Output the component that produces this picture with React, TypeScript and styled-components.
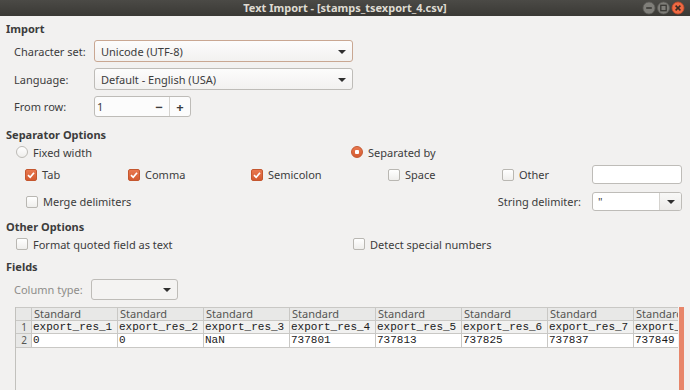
import styled, { createGlobalStyle } from "styled-components";

const GlobalStyle = createGlobalStyle`
  body {
    margin: 0;
    background: #f2f1f0;
    font-family: "Noto Sans", "DejaVu Sans", sans-serif;
  }
`;

const columns = [
  { type: "Standard", name: "export_res_1", value: "0" },
  { type: "Standard", name: "export_res_2", value: "0" },
  { type: "Standard", name: "export_res_3", value: "NaN" },
  { type: "Standard", name: "export_res_4", value: "737801" },
  { type: "Standard", name: "export_res_5", value: "737813" },
  { type: "Standard", name: "export_res_6", value: "737825" },
  { type: "Standard", name: "export_res_7", value: "737837" },
  { type: "Standard", name: "export_res_8", value: "737849" },
];

function WindowButtons() {
  return (
    <svg width="44" height="14" viewBox="0 0 44 14">
      <circle cx="7" cy="7" r="6" fill="#7f7e79" stroke="#5d5c58" strokeWidth="0.8" />
      <rect x="4.2" y="6.2" width="5.6" height="1.6" fill="#3a3935" />
      <circle cx="21.5" cy="7" r="6" fill="#7f7e79" stroke="#5d5c58" strokeWidth="0.8" />
      <rect x="18.8" y="4.3" width="5.4" height="5.4" fill="none" stroke="#3a3935" strokeWidth="1.3" />
      <circle cx="36" cy="7" r="6" fill="#ef6a43" stroke="#c8492a" strokeWidth="0.8" />
      <path d="M33.6 4.6 L38.4 9.4 M38.4 4.6 L33.6 9.4" stroke="#3a2a22" strokeWidth="1.5" />
    </svg>
  );
}

function Check({ checked }: { checked?: boolean }) {
  return (
    <CheckBox $checked={checked}>
      {checked && (
        <svg width="10" height="10" viewBox="0 0 10 10">
          <path d="M2 5.2 L4.2 7.3 L8 2.8" fill="none" stroke="#fff" strokeWidth="1.7" />
        </svg>
      )}
    </CheckBox>
  );
}

function Option({ label, checked }: { label: string; checked?: boolean }) {
  return (
    <OptionLabel>
      <Check checked={checked} />
      {label}
    </OptionLabel>
  );
}

function Radio({ label, checked }: { label: string; checked?: boolean }) {
  return (
    <OptionLabel>
      <RadioDot $checked={checked} />
      {label}
    </OptionLabel>
  );
}

function Combo({ value, width, focused, disabled }: { value: string; width: number; focused?: boolean; disabled?: boolean }) {
  return (
    <ComboBox $width={width} $focused={focused} $disabled={disabled}>
      <span>{value}</span>
      <Arrow />
    </ComboBox>
  );
}

export default function App() {
  return (
    <Window>
      <GlobalStyle />
      <TitleBar>
        <span />
        <Title>Text Import - [stamps_tsexport_4.csv]</Title>
        <ButtonSlot>
          <WindowButtons />
        </ButtonSlot>
      </TitleBar>

      <SectionTitle $top={6}>Import</SectionTitle>
      <FormGrid>
        <FieldLabel>Character set:</FieldLabel>
        <Combo value="Unicode (UTF-8)" width={259} focused />
        <FieldLabel>Language:</FieldLabel>
        <Combo value="Default - English (USA)" width={259} />
        <FieldLabel>From row:</FieldLabel>
        <Spin>
          <SpinText>1</SpinText>
          <SpinButton>−</SpinButton>
          <SpinButton $divider>+</SpinButton>
        </Spin>
      </FormGrid>

      <SectionTitle $top={11}>Separator Options</SectionTitle>
      <RadioRow>
        <Radio label="Fixed width" />
        <Radio label="Separated by" checked />
      </RadioRow>
      <SeparatorGrid>
        <Option label="Tab" checked />
        <Option label="Comma" checked />
        <Option label="Semicolon" checked />
        <Option label="Space" />
        <Option label="Other" />
        <TextEntry />
        <MergeCell>
          <Option label="Merge delimiters" />
        </MergeCell>
        <DelimiterLabel>String delimiter:</DelimiterLabel>
        <DelimiterCombo>
          <DelimiterText>"</DelimiterText>
          <DelimiterButton>
            <Arrow />
          </DelimiterButton>
        </DelimiterCombo>
      </SeparatorGrid>

      <SectionTitle $top={9}>Other Options</SectionTitle>
      <OtherRow>
        <Option label="Format quoted field as text" />
        <Option label="Detect special numbers" />
      </OtherRow>

      <SectionTitle $top={8}>Fields</SectionTitle>
      <ColumnTypeRow>
        <FieldLabel $disabled>Column type:</FieldLabel>
        <Combo value="" width={87} disabled />
      </ColumnTypeRow>

      <TableArea>
        <TableView>
          <Grid>
            <Corner />
            {columns.map((c, i) => (
              <HeadCell key={"h" + i}>{c.type}</HeadCell>
            ))}
            <RowNumber>1</RowNumber>
            {columns.map((c, i) => (
              <DataCell key={"n" + i}>{c.name}</DataCell>
            ))}
            <RowNumber $tall>2</RowNumber>
            {columns.map((c, i) => (
              <DataCell key={"v" + i} $white $tall>
                {c.value}
              </DataCell>
            ))}
          </Grid>
        </TableView>
        <ScrollThumb />
      </TableArea>
    </Window>
  );
}

const Window = styled.div`
  width: 690px;
  height: 390px;
  display: flex;
  flex-direction: column;
  background: #f2f1f0;
  color: #3c3c3c;
  font-size: 11px;
  overflow: hidden;
`;

const TitleBar = styled.div`
  flex: none;
  height: 16px;
  display: grid;
  grid-template-columns: 1fr auto 1fr;
  align-items: center;
  background: linear-gradient(#4b4a46, #3a3935);
`;

const Title = styled.div`
  color: #dfdbd2;
  font-weight: bold;
  font-size: 11px;
  line-height: 16px;
`;

const ButtonSlot = styled.div`
  display: flex;
  justify-content: flex-end;
  padding-right: 4px;
`;

const SectionTitle = styled.div<{ $top: number }>`
  margin-top: ${(p) => p.$top}px;
  padding-left: 6px;
  height: 14px;
  line-height: 14px;
  font-weight: bold;
`;

const FormGrid = styled.div`
  margin-top: 4px;
  padding-left: 14px;
  display: grid;
  grid-template-columns: 80px auto;
  grid-template-rows: 22px 22px 21px;
  row-gap: 6px;
  align-items: center;
  justify-items: start;
`;

const FieldLabel = styled.div<{ $disabled?: boolean }>`
  color: ${(p) => (p.$disabled ? "#8e8d8a" : "#3c3c3c")};
`;

const ComboBox = styled.div<{ $width: number; $focused?: boolean; $disabled?: boolean }>`
  box-sizing: border-box;
  width: ${(p) => p.$width}px;
  height: 100%;
  display: flex;
  align-items: center;
  justify-content: space-between;
  padding: 0 6px 0 6px;
  border: 1px solid ${(p) => (p.$focused ? "#c9a792" : "#bebcb8")};
  border-radius: 3px;
  background: ${(p) => (p.$disabled ? "#f4f3f2" : "linear-gradient(#fcfcfc, #f2f1f0)")};
  color: #3c3c3c;
`;

const Arrow = styled.span`
  width: 0;
  height: 0;
  border-left: 4px solid transparent;
  border-right: 4px solid transparent;
  border-top: 4px solid #2f2f2f;
  margin-top: 1px;
`;

const Spin = styled.div`
  box-sizing: border-box;
  width: 97px;
  height: 21px;
  display: flex;
  align-items: stretch;
  border: 1px solid #bebcb8;
  border-radius: 3px;
  background: #fcfcfc;
`;

const SpinText = styled.div`
  flex: 1;
  display: flex;
  align-items: center;
  padding-left: 2px;
`;

const SpinButton = styled.div<{ $divider?: boolean }>`
  width: 20px;
  display: flex;
  align-items: center;
  justify-content: center;
  font-size: 13px;
  font-weight: bold;
  color: #3c3c3c;
  border-left: ${(p) => (p.$divider ? "1px solid #d5d3cf" : "none")};
`;

const OptionLabel = styled.label`
  display: flex;
  align-items: center;
  gap: 5px;
  white-space: nowrap;
  color: #3c3c3c;
`;

const CheckBox = styled.span<{ $checked?: boolean }>`
  box-sizing: border-box;
  width: 12px;
  height: 12px;
  flex: none;
  display: flex;
  align-items: center;
  justify-content: center;
  border-radius: 2px;
  border: 1px solid ${(p) => (p.$checked ? "#c4572f" : "#b9b7b2")};
  background: ${(p) => (p.$checked ? "linear-gradient(#e9784f, #d45b31)" : "linear-gradient(#ffffff, #efeeec)")};
`;

const RadioDot = styled.span<{ $checked?: boolean }>`
  box-sizing: border-box;
  width: 12px;
  height: 12px;
  flex: none;
  border-radius: 50%;
  border: 1px solid ${(p) => (p.$checked ? "#c4572f" : "#bdbbb6")};
  background: ${(p) =>
    p.$checked
      ? "radial-gradient(circle, #ffffff 0 2px, transparent 2.5px), linear-gradient(#e9784f, #d45b31)"
      : "linear-gradient(#ffffff, #efeeec)"};
`;

const RadioRow = styled.div`
  margin-top: 2px;
  height: 16px;
  padding-left: 16px;
  display: grid;
  grid-template-columns: 335px auto;
  align-items: center;
`;

const SeparatorGrid = styled.div`
  margin-top: 5px;
  padding-left: 25px;
  display: grid;
  grid-template-columns: 103px 123px 137px 114px 90px 90px;
  grid-template-rows: 19px 19px;
  row-gap: 8px;
  align-items: center;
`;

const TextEntry = styled.div`
  box-sizing: border-box;
  height: 19px;
  border: 1px solid #bebcb8;
  border-radius: 3px;
  background: #ffffff;
`;

const MergeCell = styled.div`
  grid-column: 1 / span 3;
  padding-left: 1px;
`;

const DelimiterLabel = styled.div`
  grid-column: 4 / span 2;
  justify-self: end;
  padding-right: 11px;
`;

const DelimiterCombo = styled.div`
  box-sizing: border-box;
  height: 19px;
  display: flex;
  border: 1px solid #bebcb8;
  border-radius: 3px;
  background: #ffffff;
  overflow: hidden;
`;

const DelimiterText = styled.div`
  flex: 1;
  padding-left: 5px;
  line-height: 17px;
`;

const DelimiterButton = styled.div`
  width: 21px;
  display: flex;
  align-items: center;
  justify-content: center;
  border-left: 1px solid #d5d3cf;
  background: linear-gradient(#f8f8f7, #ecebe9);
`;

const OtherRow = styled.div`
  margin-top: 2px;
  height: 16px;
  padding-left: 16px;
  display: grid;
  grid-template-columns: 337px auto;
  align-items: center;
`;

const ColumnTypeRow = styled.div`
  margin-top: 5px;
  height: 21px;
  padding-left: 14px;
  display: grid;
  grid-template-columns: 77px auto;
  align-items: center;
`;

const TableArea = styled.div`
  flex: 1;
  margin-top: 7px;
  padding-left: 15px;
  display: flex;
  min-height: 0;
`;

const TableView = styled.div`
  width: 663px;
  overflow: hidden;
  border-left: 1px solid #c2c1bd;
  box-sizing: border-box;
`;

const Grid = styled.div`
  display: grid;
  grid-template-columns: 16px repeat(8, 86px);
  grid-auto-rows: auto;
  width: max-content;
`;

const cellBase = `
  box-sizing: border-box;
  height: 13px;
  border-right: 1px solid #c9c8c5;
  border-bottom: 1px solid #c9c8c5;
  white-space: nowrap;
  overflow: hidden;
`;

const Corner = styled.div`
  ${cellBase}
  border-top: 1px solid #c9c8c5;
  height: 14px;
  background: #e8e8e7;
`;

const HeadCell = styled.div`
  ${cellBase}
  border-top: 1px solid #c9c8c5;
  height: 14px;
  padding-left: 2px;
  background: #e8e8e7;
  color: #555553;
  font-size: 11px;
  line-height: 12px;
`;

const RowNumber = styled.div<{ $tall?: boolean }>`
  ${cellBase}
  height: ${(p) => (p.$tall ? 14 : 13)}px;
  background: #e8e8e7;
  color: #555553;
  text-align: right;
  padding-right: 4px;
  font-size: 10px;
  line-height: 12px;
`;

const DataCell = styled.div<{ $white?: boolean; $tall?: boolean }>`
  ${cellBase}
  height: ${(p) => (p.$tall ? 14 : 13)}px;
  padding-left: 1px;
  background: ${(p) => (p.$white ? "#ffffff" : "#f1f1f0")};
  color: #1a1a1a;
  font-family: "Liberation Mono", "DejaVu Sans Mono", monospace;
  font-size: 11px;
  line-height: 12px;
`;

const ScrollThumb = styled.div`
  width: 5px;
  margin-left: 1px;
  background: #e8866a;
`;
